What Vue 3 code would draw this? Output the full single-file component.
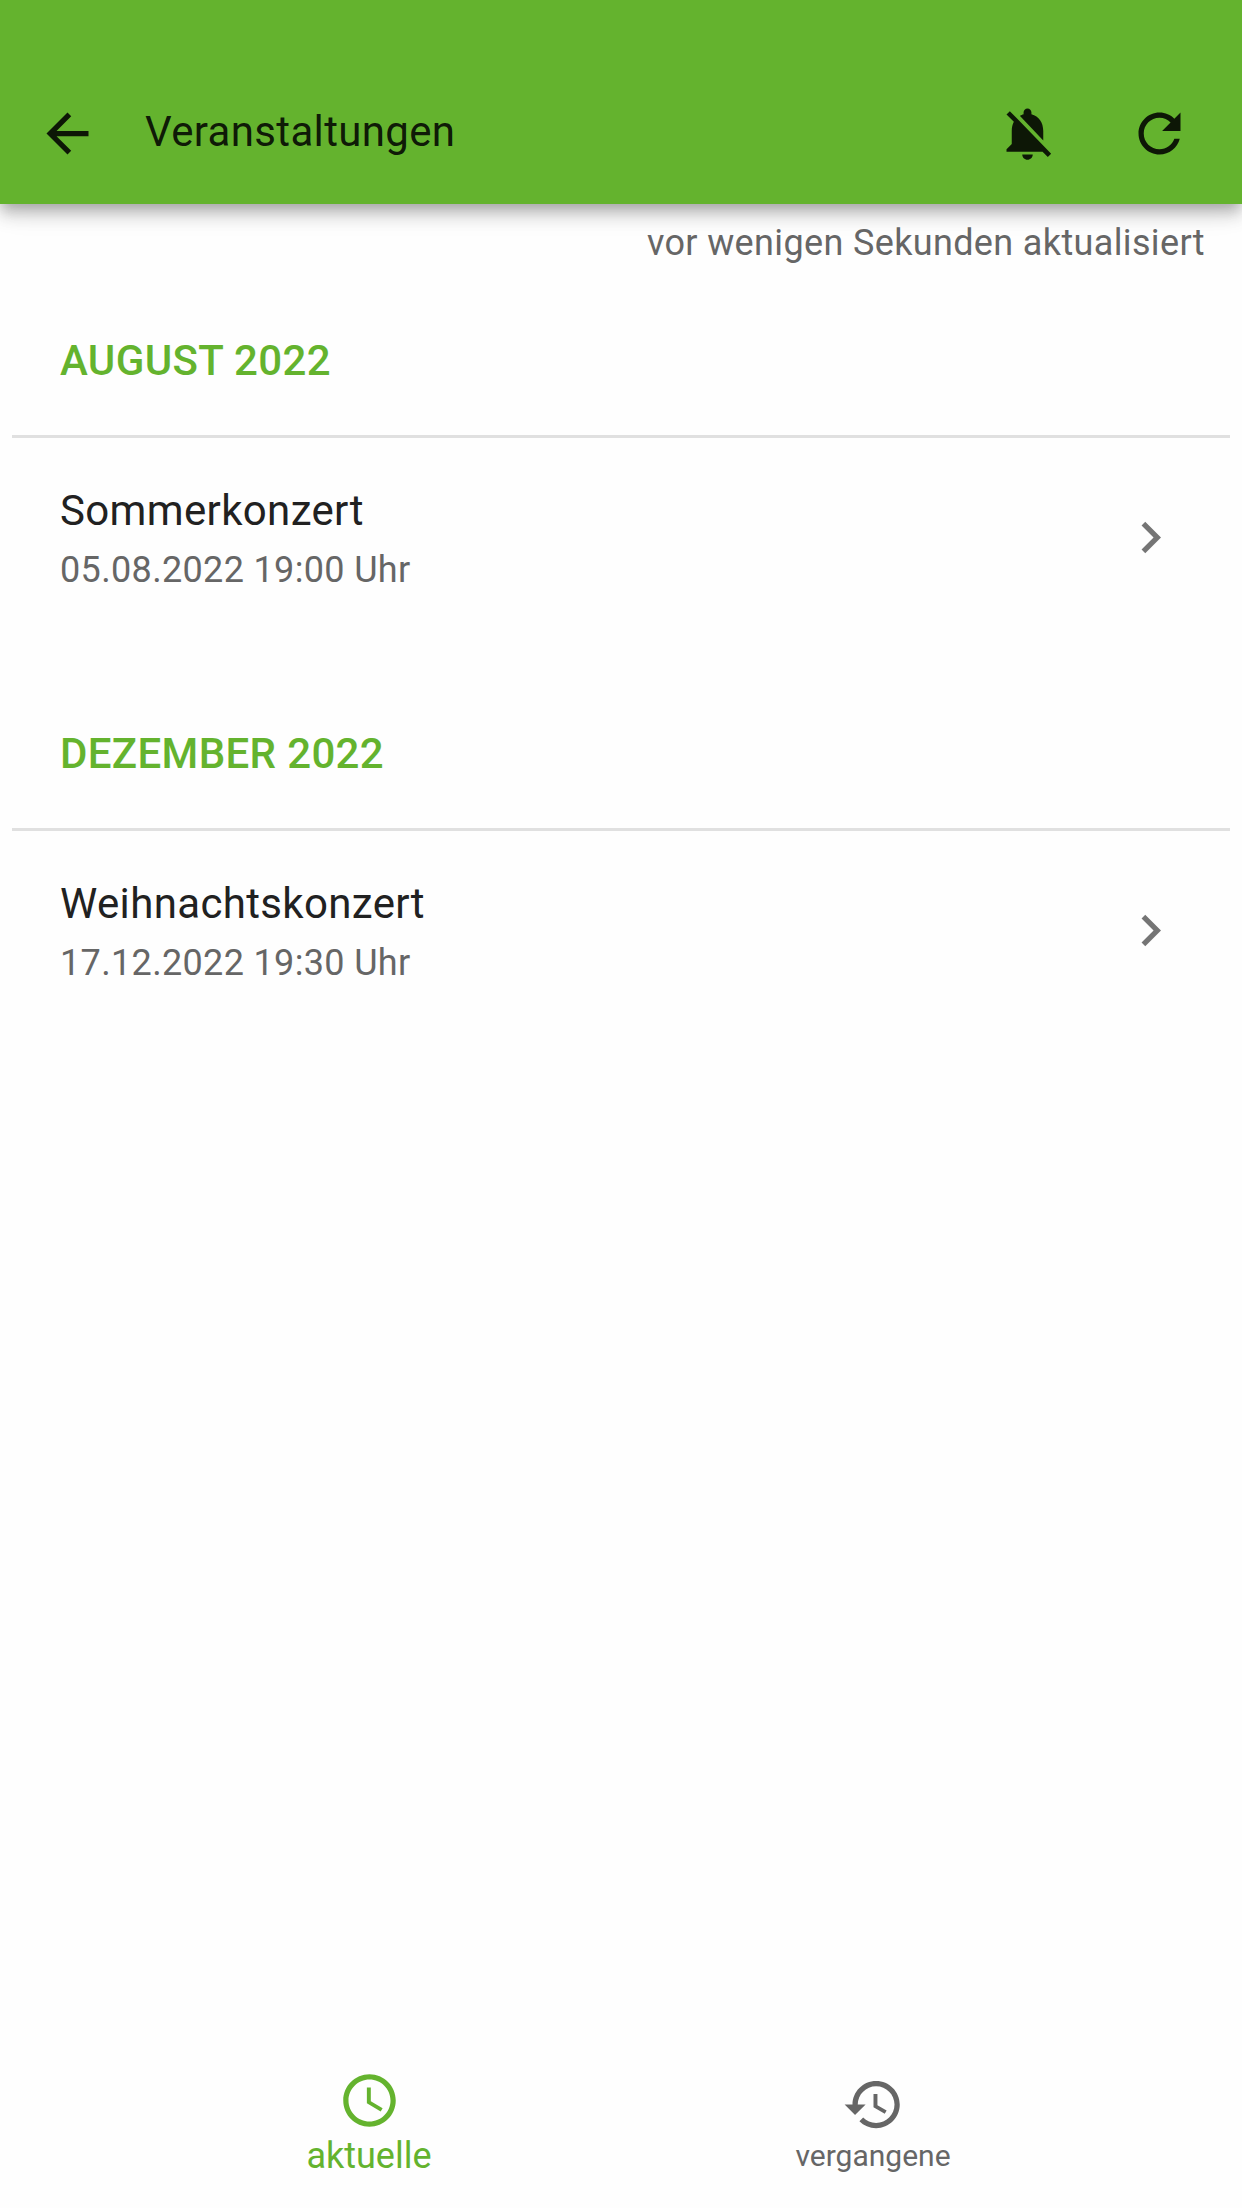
<template>
  <div class="page">
    <header class="app-bar">
      <button class="icon-button" aria-label="Zurück">
        <svg class="icon" viewBox="0 0 24 24"><path d="M20 11H7.83l5.59-5.59L12 4l-8 8 8 8 1.41-1.41L7.83 13H20v-2z" /></svg>
      </button>
      <h1 class="title">Veranstaltungen</h1>
      <button class="icon-button" aria-label="Benachrichtigungen">
        <svg class="icon" viewBox="0 0 24 24"><path d="M20 18.69L7.84 6.14 5.27 3.49 4 4.76l2.8 2.8v.01c-.52.99-.8 2.16-.8 3.42v5l-2 2v1h13.73l2 2L21 19.72l-1-1.03zM12 22c1.11 0 2-.89 2-2h-4c0 1.11.89 2 2 2zm6-7.32V11c0-3.08-1.64-5.64-4.5-6.32V4c0-.83-.67-1.5-1.5-1.5s-1.5.67-1.5 1.5v.68c-.15.03-.29.08-.42.12-.1.03-.2.07-.3.11h-.01c-.01 0-.01 0-.02.01-.23.09-.46.2-.68.31 0 0-.01 0-.01.01L18 14.68z" /></svg>
      </button>
      <button class="icon-button refresh" aria-label="Aktualisieren">
        <svg class="icon" viewBox="0 0 24 24"><path d="M17.65 6.35C16.2 4.9 14.21 4 12 4c-4.42 0-7.99 3.58-7.99 8s3.57 8 7.99 8c3.73 0 6.84-2.55 7.73-6h-2.08c-.82 2.33-3.04 4-5.65 4-3.31 0-6-2.69-6-6s2.69-6 6-6c1.66 0 3.14.69 4.22 1.78L13 11h7V4l-2.35 2.35z" /></svg>
      </button>
    </header>

    <main class="content">
      <p class="updated">vor wenigen Sekunden aktualisiert</p>

      <section v-for="group in groups" :key="group.month" class="group">
        <h2 class="month">{{ group.month }}</h2>
        <ul class="events">
          <li v-for="event in group.events" :key="event.name" class="event">
            <div class="event-text">
              <div class="event-name">{{ event.name }}</div>
              <div class="event-date">{{ event.date }}</div>
            </div>
            <svg class="icon chevron" viewBox="0 0 24 24"><path d="M10 6L8.59 7.41 13.17 12l-4.58 4.59L10 18l6-6z" /></svg>
          </li>
        </ul>
      </section>
    </main>

    <nav class="bottom-nav">
      <button
        v-for="tab in tabs"
        :key="tab.label"
        class="tab"
        :class="{ active: tab.label === current }"
        @click="current = tab.label"
      >
        <svg class="icon" viewBox="0 0 24 24"><path :d="tab.icon" /></svg>
        <span class="tab-label">{{ tab.label }}</span>
      </button>
    </nav>
  </div>
</template>

<script setup>
import { ref } from "vue";

const current = ref("aktuelle");

const groups = [
  { month: "August 2022", events: [{ name: "Sommerkonzert", date: "05.08.2022 19:00 Uhr" }] },
  { month: "Dezember 2022", events: [{ name: "Weihnachtskonzert", date: "17.12.2022 19:30 Uhr" }] },
];

const tabs = [
  {
    label: "aktuelle",
    icon: "M11.99 2C6.47 2 2 6.48 2 12s4.47 10 9.99 10C17.52 22 22 17.52 22 12S17.52 2 11.99 2zM12 20c-4.42 0-8-3.58-8-8s3.58-8 8-8 8 3.58 8 8-3.58 8-8 8zM12.5 7H11v6l5.25 3.15.75-1.23-4.5-2.67z",
  },
  {
    label: "vergangene",
    icon: "M13 3c-4.97 0-9 4.03-9 9H1l3.89 3.89.07.14L9 12H6c0-3.87 3.13-7 7-7s7 3.13 7 7-3.13 7-7 7c-1.93 0-3.68-.79-4.94-2.06l-1.42 1.42C8.27 19.99 10.51 21 13 21c4.97 0 9-4.03 9-9s-4.03-9-9-9zm-1 5v5l4.28 2.54.72-1.21-3.5-2.08V8H12z",
  },
];
</script>

<style>
body {
  margin: 0;
  background: #fefefe;
}
</style>

<style scoped>
.page {
  display: flex;
  flex-direction: column;
  height: 2208px;
  font-family: Roboto, "Liberation Sans", sans-serif;
  font-size: 42px;
  line-height: 63px;
  letter-spacing: 0.0083em;
  color: #212121;
}

h1, h2, p, ul {
  margin: 0;
  padding: 0;
  font-size: inherit;
}

button {
  padding: 0;
  border: none;
  background: none;
  color: inherit;
  font: inherit;
  cursor: pointer;
}

.icon {
  display: block;
  flex-shrink: 0;
  width: 63px;
  height: 63px;
  fill: currentColor;
}

.app-bar {
  display: flex;
  align-items: flex-start;
  box-sizing: border-box;
  height: 204px;
  padding: 100px 51.5px 0 35.5px;
  background: #64b32e;
  color: rgba(0, 0, 0, 0.87);
  box-shadow: 0 6px 12px -3px rgba(0, 0, 0, 0.2), 0 12px 15px 0 rgba(0, 0, 0, 0.14), 0 3px 30px 0 rgba(0, 0, 0, 0.12);
}

.icon-button {
  padding-top: 1.5px;
}

.title {
  flex: 1;
  margin-left: 46.5px;
  font-weight: 400;
}

.refresh {
  margin-left: 69px;
}

.content {
  flex: 1;
}

.updated {
  padding: 13px 37px 0 0;
  font-size: 36px;
  line-height: 52px;
  letter-spacing: 0.01em;
  text-align: right;
  color: #666;
}

.group {
  height: 393px;
}

.updated + .group {
  margin-top: 60px;
}

.month {
  padding: 0 60px 43px;
  font-weight: 500;
  text-transform: uppercase;
  color: #64b32e;
}

.events {
  margin: 0 12px;
  border-top: 3px solid #e0e0e0;
  list-style: none;
}

.event {
  display: flex;
  align-items: center;
  padding: 41px 48.5px 41px 48px;
}

.event-text {
  flex: 1;
}

.event-date {
  padding-top: 2px;
  font-size: 36px;
  line-height: 52px;
  letter-spacing: 0.0095em;
  color: #666;
}

.chevron {
  color: #757575;
}

.bottom-nav {
  display: flex;
  justify-content: center;
  height: 147px;
}

.tab {
  display: flex;
  flex-direction: column;
  align-items: center;
  width: 504px;
  padding-top: 11.5px;
  color: #666;
  font-size: 30px;
  line-height: 40px;
  letter-spacing: 0;
}

.tab.active {
  padding-top: 8px;
  font-size: 36px;
  line-height: 48px;
  color: #64b32e;
}
</style>
